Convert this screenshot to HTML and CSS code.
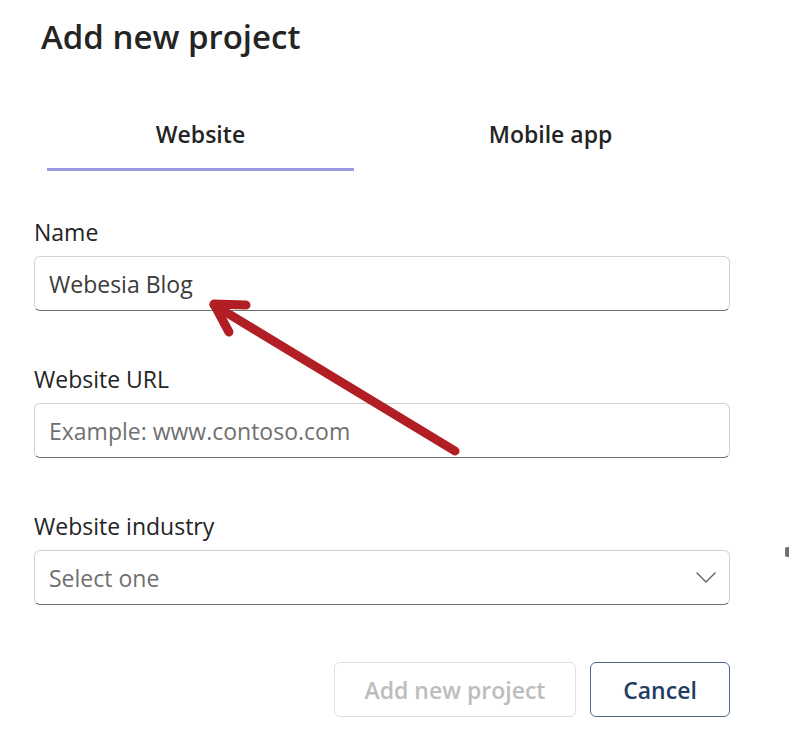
FILE: index.html
```html
<!DOCTYPE html>
<html lang="en">
<head>
<meta charset="utf-8">
<title>Add new project</title>
<link rel="stylesheet" href="styles.css">
</head>
<body>
<div class="dialog">
  <h1 class="title">Add new project</h1>
  <div class="tabs">
    <div class="tab tab-active">Website</div>
    <div class="tab">Mobile app</div>
  </div>
  <div class="field">
    <label class="label">Name</label>
    <div class="input"><span class="value">Webesia Blog</span></div>
  </div>
  <div class="field">
    <label class="label">Website URL</label>
    <div class="input"><span class="placeholder">Example: www.contoso.com</span></div>
  </div>
  <div class="field">
    <label class="label">Website industry</label>
    <div class="input select">
      <span class="placeholder">Select one</span>
      <svg class="chevron" width="20" height="11" viewBox="0 0 20 11"><path d="M1 1 L10 10 L19 1" fill="none" stroke="#616161" stroke-width="1.4" stroke-linecap="round" stroke-linejoin="round"/></svg>
    </div>
  </div>
  <div class="actions">
    <button class="btn btn-disabled">Add new project</button>
    <button class="btn btn-cancel">Cancel</button>
  </div>
</div>
<span class="edge-mark"></span>
<svg class="arrow" width="789" height="742" viewBox="0 0 789 742">
  <g fill="none" stroke="#b11f24" stroke-width="9" stroke-linecap="round" stroke-linejoin="round">
    <path d="M455 451 L214 305"/>
    <path d="M246 305 L214 304 L229 332"/>
  </g>
</svg>
</body>
</html>
```
FILE: styles.css
```css
html, body {
  margin: 0;
  padding: 0;
  background: #ffffff;
}
body {
  width: 789px;
  height: 742px;
  overflow: hidden;
  position: relative;
  font-family: "Open Sans", "Noto Sans", "Liberation Sans", sans-serif;
  color: #242424;
}
.dialog {
  padding: 0 59px 0 34px;
}
.title {
  margin: 0;
  padding: 15px 0 0 7px;
  font-size: 33px;
  line-height: 44px;
  font-weight: 600;
  color: #242424;
}
.tabs {
  display: flex;
  gap: 43px;
  margin: 42px 0 0 13px;
}
.tab {
  width: 307px;
  height: 70px;
  box-sizing: border-box;
  text-align: center;
  font-size: 23px;
  font-weight: 600;
  line-height: 30px;
  padding-top: 18px;
  color: #242424;
}
.tab-active {
  border-bottom: 3px solid #9a9be2;
}
.field {
  display: flex;
  flex-direction: column;
  margin-top: 46px;
}
.field + .field {
  margin-top: 53px;
}
.label {
  font-size: 23px;
  line-height: 30px;
  margin-bottom: 9px;
  color: #242424;
}
.input {
  height: 55px;
  box-sizing: border-box;
  border: 1px solid #d1d1d1;
  border-bottom-color: #707070;
  border-radius: 6px;
  display: flex;
  align-items: center;
  padding: 0 13px 0 14px;
  font-size: 23px;
}
.value {
  color: #3b3b3b;
}
.placeholder {
  color: #707070;
}
.select {
  justify-content: space-between;
}
.actions {
  display: flex;
  justify-content: flex-end;
  gap: 14px;
  margin-top: 57px;
}
.btn {
  height: 55px;
  box-sizing: border-box;
  border-radius: 6px;
  background: #ffffff;
  font-family: inherit;
  font-size: 23px;
  font-weight: 600;
  padding: 0;
}
.btn-disabled {
  width: 242px;
  border: 1px solid #e0e0e0;
  color: #bdbdbd;
}
.btn-cancel {
  width: 140px;
  border: 1px solid #4f6b8c;
  color: #1f3d63;
}
.edge-mark {
  position: absolute;
  left: 785px;
  top: 547px;
  width: 5px;
  height: 10px;
  border-radius: 2px;
  background: #6b6f7a;
}
.arrow {
  position: absolute;
  left: 0;
  top: 0;
  pointer-events: none;
}
```
